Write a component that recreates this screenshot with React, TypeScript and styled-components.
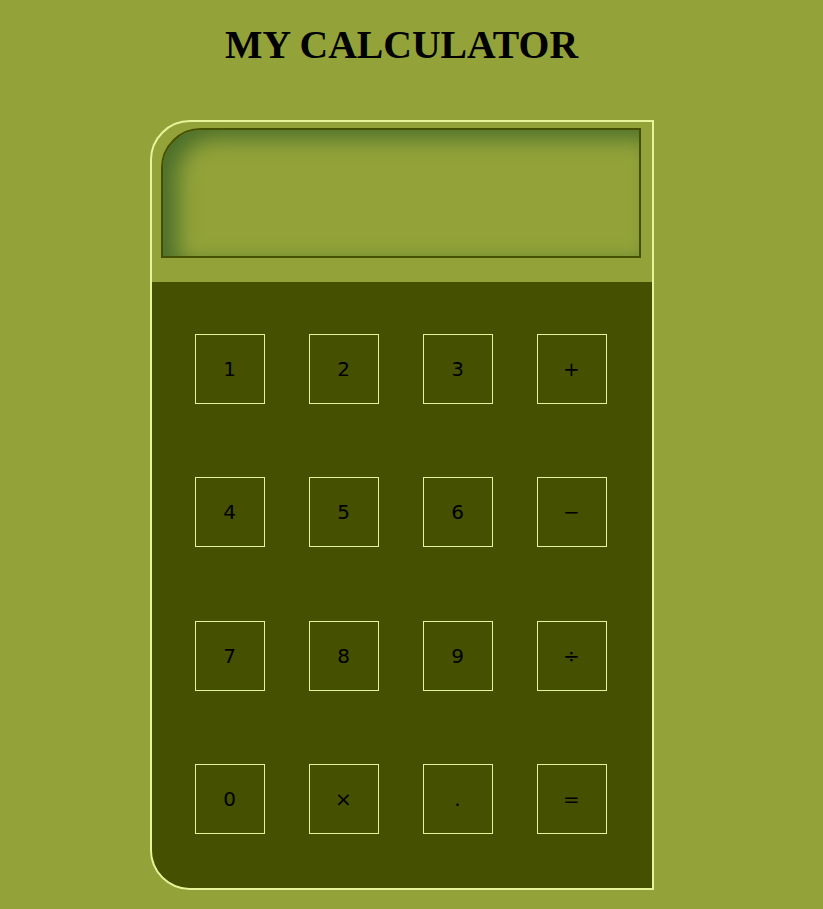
import React from "react";
import styled, { createGlobalStyle } from "styled-components";

const Global = createGlobalStyle`
  html, body { margin: 0; padding: 0; background: #93a33a; }
  body { font-family: "Liberation Serif", serif; }
`;

const Page = styled.div`
  width: 803px;
  display: flex;
  flex-direction: column;
  align-items: center;
  padding-top: 22px;
`;

const Title = styled.h1`
  margin: 0;
  font-family: "Liberation Serif", "Times New Roman", serif;
  font-weight: bold;
  font-size: 39.7px;
  line-height: 46px;
  color: #000;
`;

const Body = styled.div`
  margin-top: 52px;
  width: 500px;
  border: 2px solid #e6f59a;
  border-radius: 40px 0 0 40px;
  overflow: hidden;
  display: flex;
  flex-direction: column;
`;

const Screen = styled.div`
  margin: 6px 11px 24px 9px;
  height: 126px;
  border: 2px solid #455000;
  border-radius: 40px 0 0 0;
  background: #93a33a;
  box-shadow: inset 14px 8px 22px #4a6e2a;
`;

const Keypad = styled.div`
  background: #455000;
  height: 606px;
  padding: 15px 23px 17px 21px;
  box-sizing: border-box;
  display: grid;
  grid-template-columns: repeat(4, 1fr);
  grid-template-rows: repeat(4, 1fr);
  place-items: center;
`;

const Key = styled.button`
  width: 70px;
  height: 70px;
  box-sizing: border-box;
  border: 1px solid #e6f59a;
  background: transparent;
  color: #000;
  font-family: "DejaVu Sans", sans-serif;
  font-size: 20px;
  padding: 0;
  display: flex;
  align-items: center;
  justify-content: center;
`;

const keys = ["1", "2", "3", "+", "4", "5", "6", "−", "7", "8", "9", "÷", "0", "×", ".", "="];

export default function App() {
  return (
    <>
      <Global />
      <Page>
        <Title>MY CALCULATOR</Title>
        <Body>
          <Screen />
          <Keypad>
            {keys.map((k) => (
              <Key key={k}>{k}</Key>
            ))}
          </Keypad>
        </Body>
      </Page>
    </>
  );
}
